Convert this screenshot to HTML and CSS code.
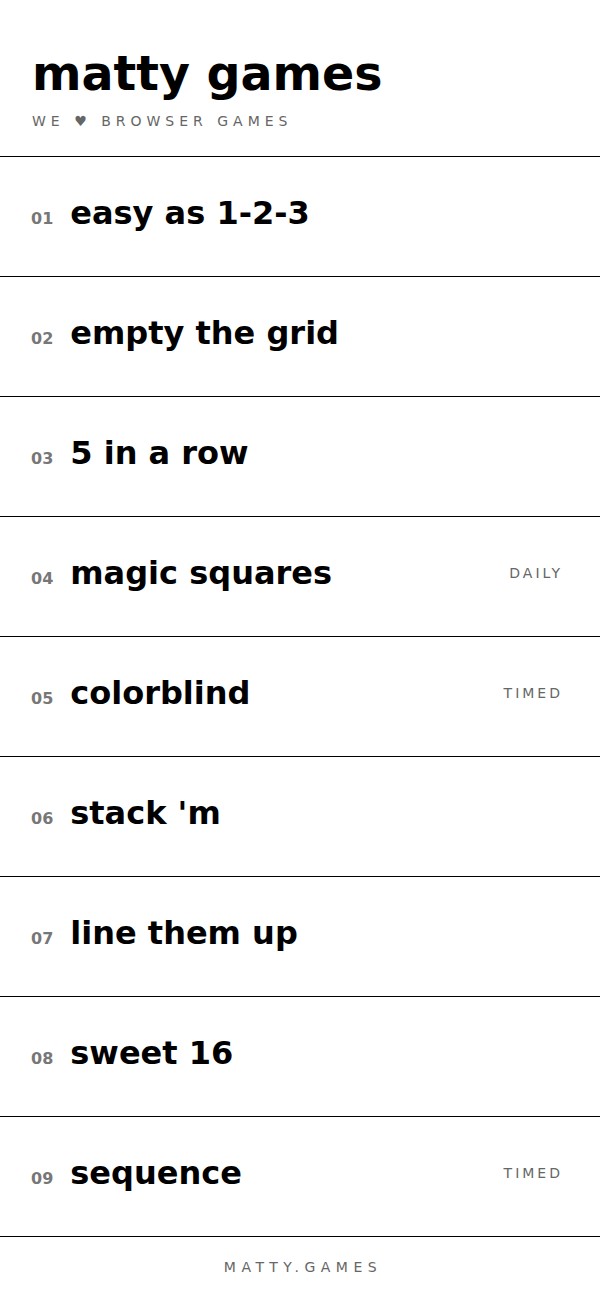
FILE: index.html
```html
<!DOCTYPE html>
<html>
<head>
  <title>matty games</title>
  <link rel="stylesheet" href="styles.css">
</head>
<body>
<div class="page">
    <div class="header">
        <div class="site-title">matty games</div>
        <div class="tagline">WE &#9829; BROWSER GAMES</div>
    </div>

    <div class="game-list">
        <a class="game" href="#">
            <span class="game-label"><span class="game-num">01</span><span class="game-name">easy as 1-2-3</span></span>
        </a>
        <a class="game" href="#">
            <span class="game-label"><span class="game-num">02</span><span class="game-name">empty the grid</span></span>
        </a>
        <a class="game" href="#">
            <span class="game-label"><span class="game-num">03</span><span class="game-name">5 in a row</span></span>
        </a>
        <a class="game" href="#">
            <span class="game-label"><span class="game-num">04</span><span class="game-name">magic squares</span></span>
            <span class="game-tag">DAILY</span>
        </a>
        <a class="game" href="#">
            <span class="game-label"><span class="game-num">05</span><span class="game-name">colorblind</span></span>
            <span class="game-tag">TIMED</span>
        </a>
        <a class="game" href="#">
            <span class="game-label"><span class="game-num">06</span><span class="game-name">stack 'm</span></span>
        </a>
        <a class="game" href="#">
            <span class="game-label"><span class="game-num">07</span><span class="game-name">line them up</span></span>
        </a>
        <a class="game" href="#">
            <span class="game-label"><span class="game-num">08</span><span class="game-name">sweet 16</span></span>
        </a>
        <a class="game" href="#">
            <span class="game-label"><span class="game-num">09</span><span class="game-name">sequence</span></span>
            <span class="game-tag">TIMED</span>
        </a>
    </div>

    <div class="footer">MATTY.GAMES</div>
</div>
</body>
</html>
```

FILE: styles.css
```css
html, body {
    margin: 0;
    background: #fff;
}
.page {
    font-family: "DejaVu Sans", sans-serif;
    color: #000;
}
.header {
    padding: 45px 32px 27px;
    border-bottom: 1px solid #000;
}
.site-title {
    font-size: 47.5px;
    font-weight: bold;
    line-height: 58px;
}
.tagline {
    margin-top: 10px;
    font-size: 14px;
    letter-spacing: 5px;
    color: #666;
}
.game {
    display: flex;
    align-items: center;
    justify-content: space-between;
    height: 120px;
    box-sizing: border-box;
    padding: 0 37px 8px 31px;
    border-bottom: 1px solid #000;
    color: #000;
    text-decoration: none;
}
.game-label {
    display: flex;
    align-items: baseline;
}
.game-num {
    font-size: 16px;
    font-weight: bold;
    color: #777;
    margin-right: 17px;
}
.game-name {
    font-size: 32px;
    font-weight: bold;
}
.game-tag {
    font-size: 14px;
    letter-spacing: 3px;
    color: #666;
}
.footer {
    padding: 22px 0 22px 6px;
    text-align: center;
    font-size: 14px;
    letter-spacing: 5.5px;
    color: #666;
}
```
